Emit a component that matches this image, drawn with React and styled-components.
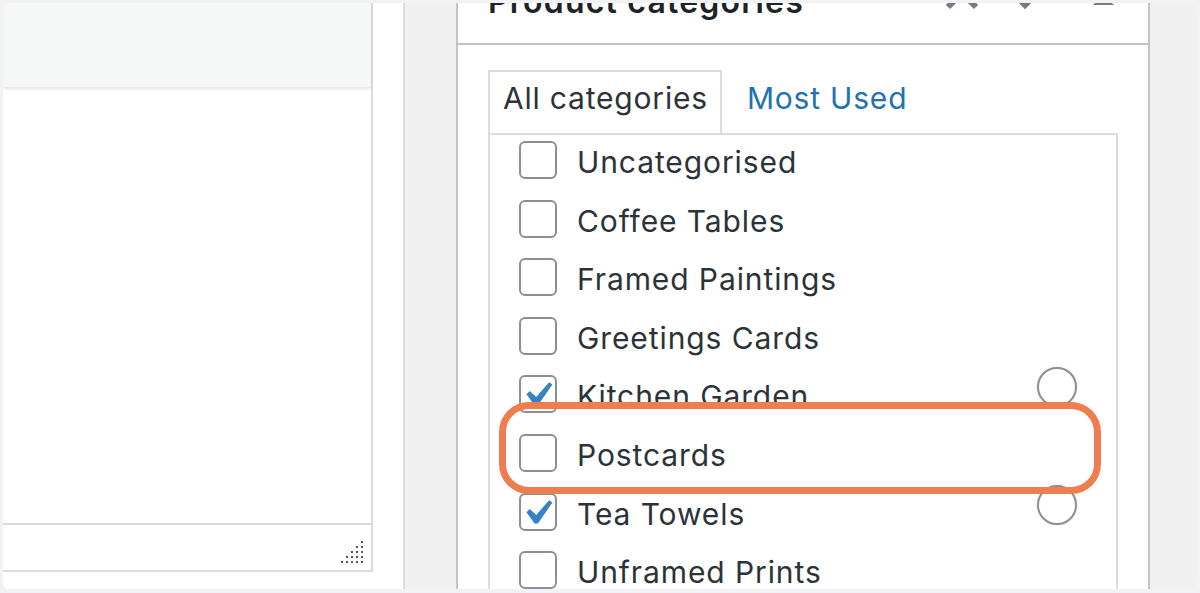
import styled, { createGlobalStyle } from 'styled-components'

const GlobalStyle = createGlobalStyle`
  html, body {
    margin: 0;
    padding: 0;
    background: #f2f1f6;
  }
  body {
    font-family: Inter, "Noto Sans", sans-serif;
    -webkit-font-smoothing: antialiased;
  }
`

const Frame = styled.div`
  width: 1200px;
  height: 593px;
  box-sizing: border-box;
  padding: 3px 3px 4px 3px;
  background: #f2f1f6;
`

const Screen = styled.div`
  display: flex;
  height: 100%;
  border-radius: 6px;
  overflow: hidden;
  background: #fff;
`

const LeftColumn = styled.div`
  width: 402px;
  flex-shrink: 0;
  box-sizing: border-box;
  border-right: 2px solid #dcdcde;
  background: #fff;
`

const Editor = styled.div`
  display: flex;
  flex-direction: column;
  width: 370px;
  height: 569px;
  box-sizing: border-box;
  border-right: 2px solid #dcdcde;
  border-bottom: 2px solid #dcdcde;
`

const Toolbar = styled.div`
  height: 84px;
  flex-shrink: 0;
  background: #f6f7f7;
  box-shadow: 0 2px 3px rgba(0, 0, 0, 0.1);
  position: relative;
  z-index: 1;
`

const EditorBody = styled.div`
  flex: 1;
  background: #fff;
`

const StatusBar = styled.div`
  height: 47px;
  flex-shrink: 0;
  box-sizing: border-box;
  border-top: 2px solid #dcdcde;
  display: flex;
  justify-content: flex-end;
  align-items: flex-end;
  padding: 0 8px 7px 0;
`

const Gutter = styled.div`
  width: 51px;
  flex-shrink: 0;
  background: #f0f0f1;
`

const Panel = styled.div`
  width: 694px;
  flex-shrink: 0;
  box-sizing: border-box;
  border-left: 2px solid #c3c4c7;
  border-right: 2px solid #c3c4c7;
  background: #fff;
  display: flex;
  flex-direction: column;
`

const RestArea = styled.div`
  flex: 1;
  background: #f0f0f1;
`

const PanelHeader = styled.div`
  height: 40px;
  flex-shrink: 0;
  border-bottom: 2px solid #c3c4c7;
  overflow: hidden;
`

const HeaderRow = styled.div`
  display: flex;
  align-items: flex-start;
  height: 40px;
  margin-top: -21px;
  padding-right: 25px;
`

const Title = styled.h2`
  flex: 1;
  margin: 0;
  padding-left: 30px;
  font-size: 32px;
  line-height: 40px;
  font-weight: 600;
  color: #1d2327;
  letter-spacing: 1.2px;
  white-space: nowrap;
`

const IconButton = styled.span`
  display: block;
  width: 40px;
  height: 40px;
  margin-left: ${(p) => p.$gap || 0}px;
  color: #787c82;
`

const PanelBody = styled.div`
  flex: 1;
  display: flex;
  flex-direction: column;
  padding: 25px 30px 0 30px;
`

const Tabs = styled.div`
  display: flex;
  align-items: flex-start;
`

const Tab = styled.div`
  height: 63px;
  box-sizing: border-box;
  padding: 6px 12px 0 13px;
  border: 2px solid ${(p) => (p.$active ? '#dcdcde' : 'transparent')};
  border-bottom: none;
  margin-left: ${(p) => (p.$active ? 0 : 10)}px;
  font-size: 30px;
  line-height: 40px;
  letter-spacing: 0.8px;
  color: ${(p) => (p.$active ? '#2c3338' : '#2271b1')};
  background: ${(p) => (p.$active ? '#fff' : 'transparent')};
  white-space: nowrap;
`

const CategoryList = styled.ul`
  flex: 1;
  margin: 0;
  padding: 1px 0 0 0;
  list-style: none;
  border: 2px solid #dcdcde;
  border-bottom: none;
`

const Row = styled.li`
  position: relative;
  display: flex;
  align-items: flex-start;
  height: 58.6px;
  padding-left: 29px;
`

const Checkbox = styled.span`
  position: relative;
  display: block;
  flex-shrink: 0;
  width: 38px;
  height: 38px;
  margin-top: 5px;
  box-sizing: border-box;
  border: 2px solid #8c8f94;
  border-radius: 6px;
  background: #fff;

  svg {
    position: absolute;
    left: -9.5px;
    top: -7px;
    width: 50px;
    height: 50px;
  }
`

const Label = styled.span`
  margin: 4px 0 0 20px;
  font-size: 30px;
  line-height: 44px;
  letter-spacing: 0.9px;
  color: #2c3338;
  white-space: nowrap;
`

const Marker = styled.span`
  display: block;
  flex-shrink: 0;
  width: 40px;
  height: 40px;
  margin: -3px 39px 0 auto;
  box-sizing: border-box;
  border: 2px solid #8c8f94;
  border-radius: 50%;
  background: #fff;
  box-shadow: 0 0 3px rgba(0, 0, 0, 0.12);
`

const Highlight = styled.span`
  position: absolute;
  left: 9px;
  top: -26.5px;
  width: 602px;
  height: 92px;
  box-sizing: border-box;
  border: 7px solid #ee7d4f;
  border-radius: 30px;
  z-index: 2;
  pointer-events: none;
`

const categories = [
  { name: 'Uncategorised' },
  { name: 'Coffee Tables' },
  { name: 'Framed Paintings' },
  { name: 'Greetings Cards' },
  { name: 'Kitchen Garden', checked: true, marker: true },
  { name: 'Postcards', highlight: true },
  { name: 'Tea Towels', checked: true, marker: true },
  { name: 'Unframed Prints' },
]

function CheckMark() {
  return (
    <svg viewBox="0 0 20 20">
      <path
        d="M14.83 4.89l1.34.94-5.81 8.38H9.02L5.78 9.67l1.34-1.25 2.57 2.4z"
        fill="#3582c4"
      />
    </svg>
  )
}

function ResizeHandle() {
  const dots = []
  for (let r = 0; r < 5; r++) {
    for (let c = 0; c <= r; c++) {
      dots.push(<rect key={`${r}-${c}`} x={20 - c * 5} y={r * 5} width="2" height="2" />)
    }
  }
  return (
    <svg width="22" height="22" viewBox="0 0 22 22" fill="#50575e">
      {dots}
    </svg>
  )
}

export default function App() {
  return (
    <>
      <GlobalStyle />
      <Frame>
        <Screen>
          <LeftColumn>
            <Editor>
              <Toolbar />
              <EditorBody />
              <StatusBar>
                <ResizeHandle />
              </StatusBar>
            </Editor>
          </LeftColumn>
          <Gutter />
          <Panel>
            <PanelHeader>
              <HeaderRow>
                <Title>Product categories</Title>
                <IconButton>
                  <svg width="40" height="40" viewBox="0 0 40 40">
                    <polyline points="6,25 20,11 34,25" fill="none" stroke="currentColor" strokeWidth="6" />
                  </svg>
                </IconButton>
                <IconButton $gap={23}>
                  <svg width="40" height="40" viewBox="0 0 40 40">
                    <polyline points="6,9 20,23 34,9" fill="none" stroke="currentColor" strokeWidth="6" />
                  </svg>
                </IconButton>
                <IconButton $gap={38}>
                  <svg width="40" height="40" viewBox="0 0 40 40">
                    <polygon points="10,23 31,23 20.5,12.5" fill="currentColor" />
                  </svg>
                </IconButton>
              </HeaderRow>
            </PanelHeader>
            <PanelBody>
              <Tabs>
                <Tab $active>All categories</Tab>
                <Tab>Most Used</Tab>
              </Tabs>
              <CategoryList>
                {categories.map((cat) => (
                  <Row key={cat.name}>
                    <Checkbox>{cat.checked && <CheckMark />}</Checkbox>
                    <Label>{cat.name}</Label>
                    {cat.marker && <Marker />}
                    {cat.highlight && <Highlight />}
                  </Row>
                ))}
              </CategoryList>
            </PanelBody>
          </Panel>
          <RestArea />
        </Screen>
      </Frame>
    </>
  )
}
